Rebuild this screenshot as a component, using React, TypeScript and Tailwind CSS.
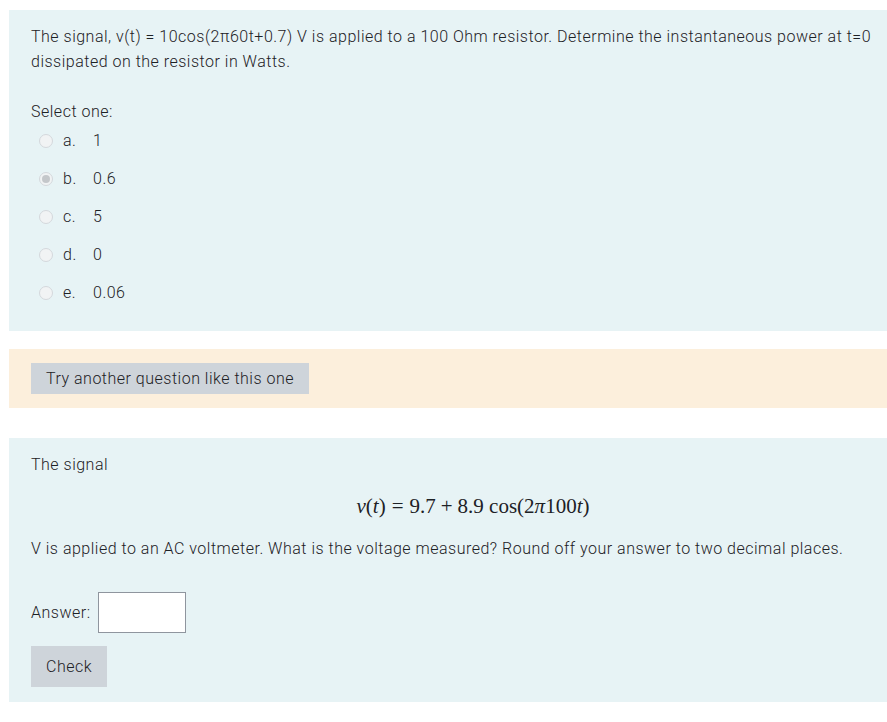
import React from 'react';

const options = [
  { letter: 'a.', value: '1', checked: false },
  { letter: 'b.', value: '0.6', checked: true },
  { letter: 'c.', value: '5', checked: false },
  { letter: 'd.', value: '0', checked: false },
  { letter: 'e.', value: '0.06', checked: false },
];

function Radio({ checked }: { checked: boolean }) {
  return (
    <span className="flex h-[14px] w-[14px] items-center justify-center rounded-full border border-[#d4d8dc] bg-[#f1f3f4]">
      {checked && <span className="h-[8px] w-[8px] rounded-full bg-[#c4c7ca]" />}
    </span>
  );
}

export default function App() {
  return (
    <div
      className="h-[722px] w-[887px] overflow-hidden bg-white text-[16px] font-light leading-[25px] tracking-[0.5px] text-[#1d2125]"
      style={{ fontFamily: 'Roboto, "Liberation Sans", sans-serif' }}
    >
      <div className="w-[937px] pl-[9px] pt-[10px]">
        {/* Question 1 */}
        <section className="bg-[#e7f3f5] px-[22px] pb-[26px] pt-[14px]">
          <p>
            The signal, v(t) = 10cos(2π60t+0.7) V is applied to a 100 Ohm resistor. Determine the instantaneous power at t=0
            dissipated on the resistor in Watts.
          </p>
          <p className="mt-[25px]">Select one:</p>
          <div className="mt-[4px] flex flex-col gap-[13px]">
            {options.map((o) => (
              <div key={o.letter} className="flex items-center pl-[8px]">
                <Radio checked={o.checked} />
                <span className="ml-[10px] w-[30px]">{o.letter}</span>
                <span>{o.value}</span>
              </div>
            ))}
          </div>
        </section>

        {/* Try another */}
        <section className="mt-[18px] bg-[#fcefdc] px-[22px] py-[14px]">
          <button className="h-[31px] bg-[#ced4da] px-[15px] font-light text-[#1d2125]">
            Try another question like this one
          </button>
        </section>

        {/* Question 2 */}
        <section className="mt-[30px] bg-[#e7f3f5] px-[22px] pb-[15px] pt-[14px]">
          <p>The signal</p>
          <div
            className="mt-[17px] text-center text-[21px] leading-[25px] tracking-normal"
            style={{ fontFamily: '"Liberation Serif", "DejaVu Serif", serif' }}
          >
            <i>v</i>(<i>t</i>)<span className="mx-[6px]">=</span>9.7<span className="mx-[5px]">+</span>8.9 cos(2<i>π</i>100<i>t</i>)
          </div>
          <p className="mt-[17px]">
            V is applied to an AC voltmeter. What is the voltage measured? Round off your answer to two decimal places.
          </p>
          <div className="mt-[31px] flex items-center gap-[7px]">
            <span>Answer:</span>
            <input className="h-[41px] w-[88px] border border-[#8f959e] bg-white" />
          </div>
          <button className="mt-[13px] h-[41px] bg-[#ced4da] px-[15px] font-light text-[#1d2125]">Check</button>
        </section>
      </div>
    </div>
  );
}
